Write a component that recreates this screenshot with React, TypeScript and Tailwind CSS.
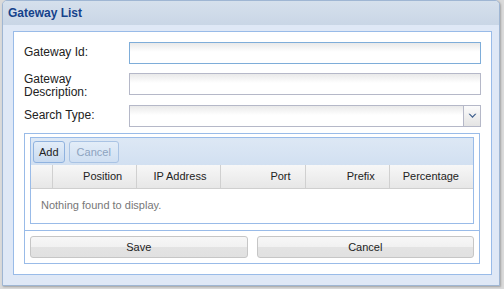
import React from "react";

const inputBg = "bg-[linear-gradient(to_bottom,#e9e9e9,#ffffff_45%)]";

function Field({ focused }: { focused?: boolean }) {
  return (
    <div
      className={`w-[352px] h-[22px] border ${focused ? "border-[#7eadd9]" : "border-[#b5b8c8]"} ${inputBg}`}
    />
  );
}

export default function App() {
  return (
    <div className="w-[504px] h-[289px] bg-[#dadada] overflow-hidden font-['Liberation_Sans',Arial,sans-serif] text-[#222]">
      <div className="ml-[2px] w-[498px] h-[286px] border border-[#9fb6d3] rounded-t-[5px] bg-[#dfe8f6] flex flex-col shadow-[1px_1px_2px_rgba(0,0,0,0.25)] overflow-hidden">
        <div className="h-[24px] shrink-0 bg-[linear-gradient(to_bottom,#d5e0ec,#c9d6e6)] pl-[5px] text-[12px] leading-[24px] font-bold text-[#15428b]">
          Gateway List
        </div>
        <div className="flex-1 pt-[6px] pl-[10px] pr-[7px] pb-[10px]">
          <div className="h-[244px] border border-[#99bbe8] bg-white pt-[10px] px-[10px]">
            <div className="flex h-[22px]">
              <div className="w-[105px] text-[12px] leading-[13px] pt-[4px]">Gateway Id:</div>
              <Field focused />
            </div>
            <div className="flex h-[22px] mt-[9px]">
              <div className="w-[105px] text-[12px] leading-[13px] pr-[8px]">Gateway Description:</div>
              <Field />
            </div>
            <div className="flex h-[22px] mt-[10px]">
              <div className="w-[105px] text-[12px] leading-[13px] pt-[4px]">Search Type:</div>
              <div className={`w-[352px] h-[22px] border border-[#b5b8c8] flex ${inputBg}`}>
                <div className="flex-1" />
                <div className="w-[17px] h-full border-l border-[#b5b8c8] bg-[linear-gradient(to_bottom,#fbfbfb,#e4e4e4)] flex items-center justify-center">
                  <svg width="9" height="6" viewBox="0 0 9 6">
                    <path d="M0.5 0.8 L4.5 5 L8.5 0.8 L7 0.8 L4.5 3.3 L2 0.8 Z" fill="#3e5f8e" />
                  </svg>
                </div>
              </div>
            </div>

            <div className="mt-[6px] w-[456px] border border-[#99bbe8]">
              <div className="pt-[3px] px-[5px] pb-[6px]">
                <div className="border border-[#99bbe8]">
                  <div className="h-[27px] bg-[linear-gradient(to_bottom,#dde8f5,#d2e0f1)] flex items-center pl-[2px] gap-[4px]">
                    <div className="h-[22px] px-[5px] rounded-[3px] border border-[#8fb2df] bg-[linear-gradient(to_bottom,#e3edf8,#c8daf0)] text-[11px] leading-[20px] text-[#222]">
                      Add
                    </div>
                    <div className="h-[22px] px-[7px] rounded-[3px] border border-[#a9c3e4] bg-[linear-gradient(to_bottom,#e3edf8,#cfdff2)] text-[11px] leading-[20px] text-[#8da3bf]">
                      Cancel
                    </div>
                  </div>
                  <div className="h-[24px] grid grid-cols-[21px_repeat(5,1fr)] border-b border-[#cfcfcf] bg-[linear-gradient(to_bottom,#f7f7f7,#e7e7e7)] text-[11px] leading-[23px]">
                    <div />
                    <div className="border-l border-[#d0d0d0] text-right pr-[14px]">Position</div>
                    <div className="border-l border-[#d0d0d0] text-right pr-[14px]">IP Address</div>
                    <div className="border-l border-[#d0d0d0] text-right pr-[14px]">Port</div>
                    <div className="border-l border-[#d0d0d0] text-right pr-[14px]">Prefix</div>
                    <div className="border-l border-[#d0d0d0] text-right pr-[14px]">Percentage</div>
                  </div>
                  <div className="h-[34px] pt-[10px] pl-[10px] text-[11px] leading-[13px] text-[#777]">
                    Nothing found to display.
                  </div>
                </div>
              </div>
              <div className="border-t border-[#99bbe8] p-[5px] grid grid-cols-2 gap-[9px]">
                <div className="h-[22px] rounded-[3px] border border-[#c6c6c6] bg-[linear-gradient(to_bottom,#f7f7f7_0%,#f1f1f1_50%,#e3e3e3_51%,#e1e1e1_100%)] text-center text-[11px] leading-[20px] text-[#222]">
                  Save
                </div>
                <div className="h-[22px] rounded-[3px] border border-[#c6c6c6] bg-[linear-gradient(to_bottom,#f7f7f7_0%,#f1f1f1_50%,#e3e3e3_51%,#e1e1e1_100%)] text-center text-[11px] leading-[20px] text-[#222]">
                  Cancel
                </div>
              </div>
            </div>
          </div>
        </div>
      </div>
    </div>
  );
}
